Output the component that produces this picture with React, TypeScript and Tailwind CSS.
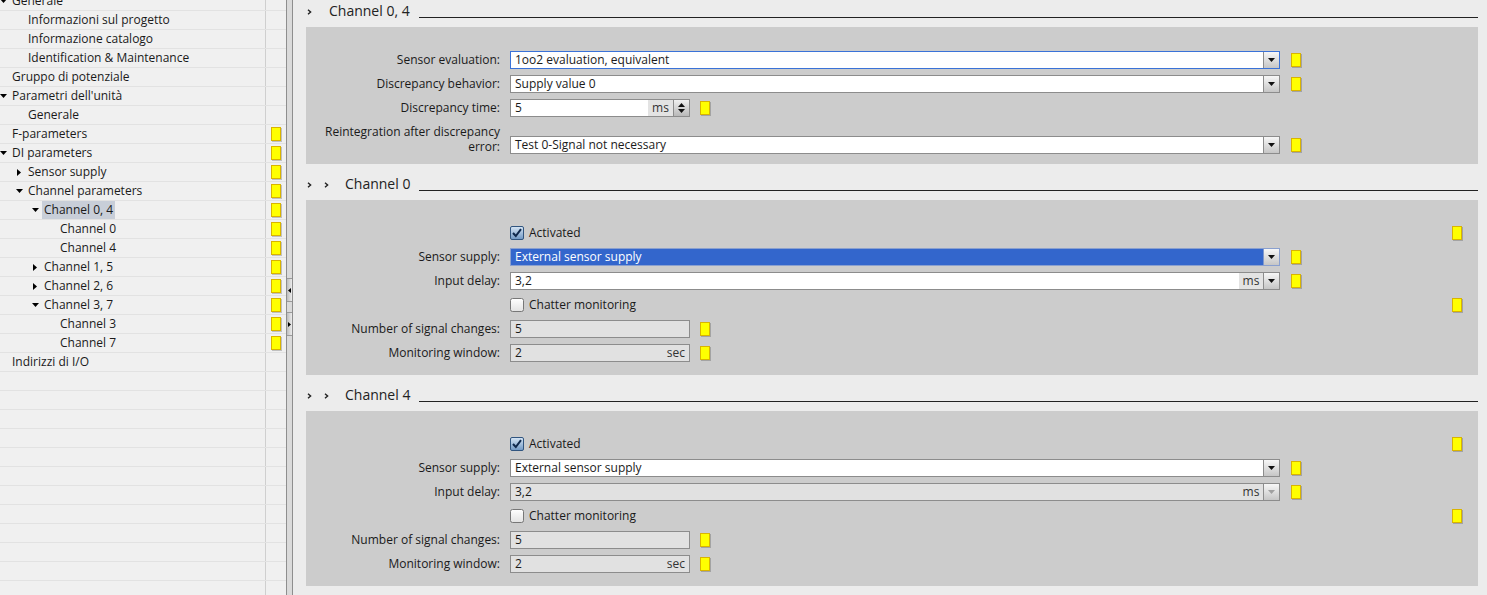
import React from "react";

const FONT = { fontFamily: '"Open Sans", "Noto Sans", "Liberation Sans", sans-serif' };

type TreeItem = { t: string; l: number; a?: "down" | "right"; m?: boolean; sel?: boolean };

const tree: TreeItem[] = [
  { t: "Generale", l: 0, a: "down" },
  { t: "Informazioni sul progetto", l: 1 },
  { t: "Informazione catalogo", l: 1 },
  { t: "Identification & Maintenance", l: 1 },
  { t: "Gruppo di potenziale", l: 0 },
  { t: "Parametri dell'unità", l: 0, a: "down" },
  { t: "Generale", l: 1 },
  { t: "F-parameters", l: 0, m: true },
  { t: "DI parameters", l: 0, a: "down", m: true },
  { t: "Sensor supply", l: 1, a: "right", m: true },
  { t: "Channel parameters", l: 1, a: "down", m: true },
  { t: "Channel 0, 4", l: 2, a: "down", m: true, sel: true },
  { t: "Channel 0", l: 3, m: true },
  { t: "Channel 4", l: 3, m: true },
  { t: "Channel 1, 5", l: 2, a: "right", m: true },
  { t: "Channel 2, 6", l: 2, a: "right", m: true },
  { t: "Channel 3, 7", l: 2, a: "down", m: true },
  { t: "Channel 3", l: 3, m: true },
  { t: "Channel 7", l: 3, m: true },
  { t: "Indirizzi di I/O", l: 0 },
];

const levelPad: Record<number, string> = { 0: "pl-0", 1: "pl-[16px]", 2: "pl-[32px]", 3: "pl-[48px]" };

const Marker = () => (
  <div className="w-[10px] h-[14px] shrink-0 bg-[#ffff00] border border-[#d9b400] shadow-[1px_1px_0_rgba(0,0,0,0.2)]" />
);

const TriDown = ({ color = "#000" }: { color?: string }) => (
  <svg width="7" height="4" viewBox="0 0 7 4">
    <polygon points="0,0 7,0 3.5,4" fill={color} />
  </svg>
);

const TriRight = () => (
  <svg width="4" height="7" viewBox="0 0 4 7">
    <polygon points="0,0 4,3.5 0,7" fill="#000" />
  </svg>
);

const Chevron = () => (
  <svg width="5" height="6" viewBox="0 0 5 6">
    <polyline points="1,0.8 3.6,3 1,5.2" fill="none" stroke="#222" strokeWidth="1.4" />
  </svg>
);

function TreeRow({ item }: { item?: TreeItem }) {
  return (
    <div className="flex h-[19px] border-b border-[#e2e2e2]">
      <div className={`w-[266px] border-r border-[#cfcfcf] flex items-center ${item ? levelPad[item.l] : ""}`}>
        {item && (
          <>
            <div className="w-[12px] flex items-center">
              {item.a === "down" && <TriDown />}
              {item.a === "right" && (
                <span className="ml-[1px] flex">
                  <TriRight />
                </span>
              )}
            </div>
            <span
              className={`text-[12px] leading-[18px] text-[#1a1a1a] whitespace-nowrap ${
                item.sel ? "bg-[#c8ced8] px-[2px] -ml-[2px]" : ""
              }`}
            >
              {item.t}
            </span>
          </>
        )}
      </div>
      <div className="w-[20px] flex items-center pl-[5px]">{item?.m && <Marker />}</div>
    </div>
  );
}

function DropButton({ disabled, blue }: { disabled?: boolean; blue?: boolean }) {
  return (
    <div
      className={`w-[16px] h-full shrink-0 border-l flex items-center justify-center bg-gradient-to-b from-[#f7f7f7] to-[#c6c6c6] ${
        blue ? "border-[#7f98cc]" : "border-[#8c8c8c]"
      }`}
    >
      <TriDown color={disabled ? "#a0a0a0" : "#111"} />
    </div>
  );
}

function Select({
  value,
  focused,
  selected,
  unit,
  disabled,
}: {
  value: string;
  focused?: boolean;
  selected?: boolean;
  unit?: string;
  disabled?: boolean;
}) {
  const border = focused ? "border-[#3a72d8]" : selected ? "border-[#8aa0cf]" : "border-[#8c8c8c]";
  const bg = selected ? "bg-[#3366cc] text-white" : disabled ? "bg-[#e1e1e1] text-[#1a1a1a]" : "bg-white text-[#1a1a1a]";
  return (
    <div className={`w-[770px] h-[18px] border ${border} ${bg} flex shrink-0`}>
      <div className="flex-1 pl-[4px] text-[12px] leading-[16px] whitespace-nowrap">{value}</div>
      {unit && (
        <div
          className={`w-[24px] text-[12px] leading-[16px] text-center text-[#333] ${
            disabled ? "" : "bg-[#e3e3e3]"
          }`}
        >
          {unit}
        </div>
      )}
      <DropButton disabled={disabled} blue={selected} />
    </div>
  );
}

function Spinner() {
  return (
    <div className="w-[16px] h-full shrink-0 border-l border-[#8c8c8c] flex flex-col items-center justify-center gap-[2px] bg-gradient-to-b from-[#f0f0f0] to-[#b8b8b8]">
      <svg width="7" height="4" viewBox="0 0 7 4">
        <polygon points="0,4 7,4 3.5,0" fill="#111" />
      </svg>
      <svg width="7" height="4" viewBox="0 0 7 4">
        <polygon points="0,0 7,0 3.5,4" fill="#111" />
      </svg>
    </div>
  );
}

function SmallField({
  value,
  unit,
  disabled,
  spinner,
}: {
  value: string;
  unit?: string;
  disabled?: boolean;
  spinner?: boolean;
}) {
  return (
    <div
      className={`w-[180px] h-[18px] border border-[#8c8c8c] flex shrink-0 ${
        disabled ? "bg-[#e1e1e1]" : "bg-white"
      }`}
    >
      <div className="flex-1 pl-[4px] text-[12px] leading-[16px] text-[#1a1a1a]">{value}</div>
      {unit && (
        <div
          className={`text-[12px] leading-[16px] text-[#333] ${
            spinner ? "w-[25px] text-center bg-[#e3e3e3]" : "pr-[4px]"
          }`}
        >
          {unit}
        </div>
      )}
      {spinner && <Spinner />}
    </div>
  );
}

function CheckBox({ checked }: { checked?: boolean }) {
  return checked ? (
    <svg width="14" height="14" viewBox="0 0 14 14">
      <defs>
        <linearGradient id="cbg" x1="0" y1="0" x2="0" y2="1">
          <stop offset="0" stopColor="#d7e6f5" />
          <stop offset="1" stopColor="#6f97c4" />
        </linearGradient>
      </defs>
      <rect x="0.5" y="0.5" width="13" height="13" rx="1.5" fill="url(#cbg)" stroke="#31557f" />
      <polyline points="3,7 5.8,10 11,3.2" fill="none" stroke="#10294d" strokeWidth="2" />
    </svg>
  ) : (
    <svg width="14" height="14" viewBox="0 0 14 14">
      <defs>
        <linearGradient id="cbu" x1="0" y1="0" x2="0" y2="1">
          <stop offset="0" stopColor="#ffffff" />
          <stop offset="1" stopColor="#e2e2e2" />
        </linearGradient>
      </defs>
      <rect x="0.5" y="0.5" width="13" height="13" rx="2" fill="url(#cbu)" stroke="#777" />
    </svg>
  );
}

function Row({ label, children }: { label: string; children: React.ReactNode }) {
  return (
    <div className="flex items-center h-[24px]">
      <div className="w-[194px] text-right text-[12px] text-[#1a1a1a] whitespace-nowrap">{label}</div>
      <div className="ml-[10px] flex items-center">{children}</div>
    </div>
  );
}

function CheckRow({ label, checked }: { label: string; checked?: boolean }) {
  return (
    <div className="flex items-center h-[24px] pr-[16px]">
      <div className="w-[204px]" />
      <CheckBox checked={checked} />
      <span className="ml-[5px] text-[12px] text-[#1a1a1a]">{label}</span>
      <div className="ml-auto">
        <Marker />
      </div>
    </div>
  );
}

function Header({ title, double }: { title: string; double?: boolean }) {
  return (
    <div className="flex h-[27px]">
      <div className="flex items-start pt-[9px] pl-[1px]">
        <Chevron />
        {double && (
          <span className="ml-[12px] flex">
            <Chevron />
          </span>
        )}
      </div>
      <div className={`${double ? "ml-[16px]" : "ml-[17px]"} text-[14px] leading-[22px] text-[#222] whitespace-nowrap`}>
        {title}
      </div>
      <div className="flex-1 ml-[9px] mt-[17px] h-px bg-[#222]" />
    </div>
  );
}

function ChannelBox({ sel, title }: { sel?: boolean; title: string }) {
  return (
    <>
      <div className="mt-[9px]">
        <Header title={title} double />
      </div>
      <div className="bg-[#cccccc] pt-[21px] pb-[10px]">
        <CheckRow label="Activated" checked />
        <Row label="Sensor supply:">
          <Select value="External sensor supply" selected={sel} />
          <div className="ml-[11px]">
            <Marker />
          </div>
        </Row>
        <Row label="Input delay:">
          <Select value="3,2" unit="ms" disabled={!sel} />
          <div className="ml-[11px]">
            <Marker />
          </div>
        </Row>
        <CheckRow label="Chatter monitoring" />
        <Row label="Number of signal changes:">
          <SmallField value="5" disabled />
          <div className="ml-[10px]">
            <Marker />
          </div>
        </Row>
        <Row label="Monitoring window:">
          <SmallField value="2" unit="sec" disabled />
          <div className="ml-[10px]">
            <Marker />
          </div>
        </Row>
      </div>
    </>
  );
}

export default function App() {
  const rows: (TreeItem | undefined)[] = [...tree];
  while (rows.length < 34) rows.push(undefined);
  return (
    <div className="w-[1487px] h-[595px] overflow-hidden flex bg-[#ececec]" style={FONT}>
      {/* Tree */}
      <div className="w-[286px] h-full bg-[#f0f0f0] overflow-hidden shrink-0">
        <div className="-mt-[8px]">
          {rows.map((r, i) => (
            <TreeRow key={i} item={r} />
          ))}
        </div>
      </div>
      {/* Splitter */}
      <div className="w-[7px] h-full shrink-0 border-l border-r border-[#8e8e8e] bg-[#dadada] flex flex-col pt-[278px]">
        <div className="h-[24px] border-y border-[#9a9a9a] bg-gradient-to-r from-[#bdbdbd] to-[#ececec] flex items-center justify-center">
          <svg width="3" height="5" viewBox="0 0 3 5">
            <polygon points="3,0 0,2.5 3,5" fill="#000" />
          </svg>
        </div>
        <div className="h-[24px] mt-[10px] border-y border-[#9a9a9a] bg-gradient-to-r from-[#bdbdbd] to-[#ececec] flex items-center justify-center">
          <svg width="3" height="5" viewBox="0 0 3 5">
            <polygon points="0,0 3,2.5 0,5" fill="#000" />
          </svg>
        </div>
      </div>
      {/* Right content */}
      <div className="flex-1 h-full pl-[13px] pr-[9px] overflow-hidden">
        <Header title="Channel 0, 4" />
        <div className="bg-[#cccccc] pt-[21px] pb-[10px]">
          <Row label="Sensor evaluation:">
            <Select value="1oo2 evaluation, equivalent" focused />
            <div className="ml-[11px]">
              <Marker />
            </div>
          </Row>
          <Row label="Discrepancy behavior:">
            <Select value="Supply value 0" />
            <div className="ml-[11px]">
              <Marker />
            </div>
          </Row>
          <Row label="Discrepancy time:">
            <SmallField value="5" unit="ms" spinner />
            <div className="ml-[10px]">
              <Marker />
            </div>
          </Row>
          <div className="flex items-end mt-[4px]">
            <div className="w-[194px] text-right text-[12px] leading-[15px] text-[#1a1a1a] whitespace-nowrap">
              Reintegration after discrepancy
              <br />
              error:
            </div>
            <div className="ml-[10px] flex items-center">
              <Select value="Test 0-Signal not necessary" />
              <div className="ml-[11px]">
                <Marker />
              </div>
            </div>
          </div>
        </div>
        <ChannelBox title="Channel 0" sel />
        <ChannelBox title="Channel 4" />
      </div>
    </div>
  );
}
